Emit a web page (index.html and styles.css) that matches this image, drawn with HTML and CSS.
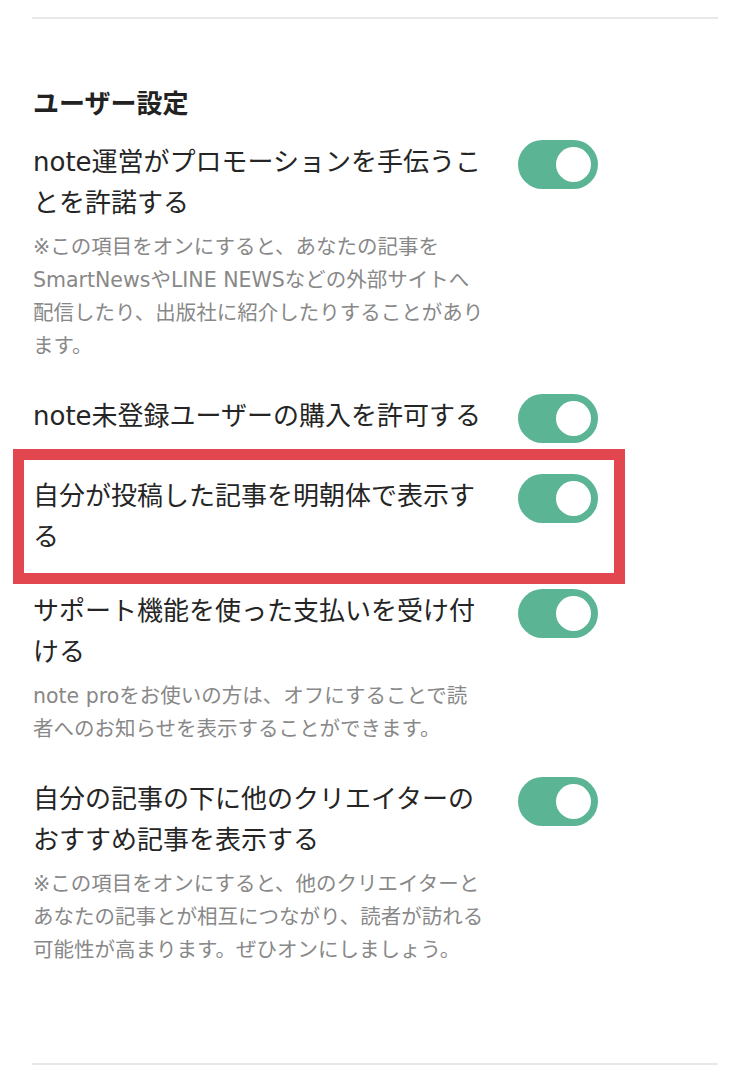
FILE: index.html
```html
<!DOCTYPE html>
<html lang="ja">
<head>
    <meta charset="UTF-8">
    <title>ユーザー設定</title>
    <link rel="stylesheet" href="styles.css">
</head>
<body>
    <div class="wrap">
        <div class="section">
            <h2 class="title">ユーザー設定</h2>
            <ul class="list">
                <li class="item">
                    <div class="text">
                        <p class="label">note運営がプロモーションを手伝うことを許諾する</p>
                        <p class="desc">※この項目をオンにすると、あなたの記事をSmartNewsやLINE NEWSなどの外部サイトへ配信したり、出版社に紹介したりすることがあります。</p>
                    </div>
                    <span class="toggle on"></span>
                </li>
                <li class="item">
                    <div class="text">
                        <p class="label">note未登録ユーザーの購入を許可する</p>
                    </div>
                    <span class="toggle on"></span>
                </li>
                <li class="item mark">
                    <div class="text">
                        <p class="label">自分が投稿した記事を明朝体で表示する</p>
                    </div>
                    <span class="toggle on"></span>
                </li>
                <li class="item">
                    <div class="text">
                        <p class="label">サポート機能を使った支払いを受け付ける</p>
                        <p class="desc">note proをお使いの方は、オフにすることで読者へのお知らせを表示することができます。</p>
                    </div>
                    <span class="toggle on"></span>
                </li>
                <li class="item">
                    <div class="text">
                        <p class="label">自分の記事の下に他のクリエイターのおすすめ記事を表示する</p>
                        <p class="desc">※この項目をオンにすると、他のクリエイターとあなたの記事とが相互につながり、読者が訪れる可能性が高まります。ぜひオンにしましょう。</p>
                    </div>
                    <span class="toggle on"></span>
                </li>
            </ul>
        </div>
    </div>
</body>
</html>
```

FILE: styles.css
```css
*,*::before,*::after{
    margin: 0;
    padding: 0;
    list-style: none;
    box-sizing: border-box;
}
html,body{
    width: 100%;
    height: 100%;
    background: #fff;
}
body{
    font-family: "DejaVu Sans", "Noto Sans CJK JP", sans-serif;
    color: #222;
}
.wrap{
    padding: 17px 32px 0;
}
.section{
    border-top: 2px solid #e8e8e8;
    border-bottom: 2px solid #e8e8e8;
    padding: 67px 0 96px;
}
.title{
    font-size: 26px;
    font-weight: bold;
    line-height: 36px;
    margin-bottom: 20px;
    padding-left: 1px;
}
.list .item{
    display: flex;
    align-items: flex-start;
    margin-bottom: 33px;
    position: relative;
}
.list .item:last-child{
    margin-bottom: 0;
}
.text{
    width: 453px;
    padding-left: 1px;
}
.label{
    font-size: 26px;
    line-height: 41px;
    color: #252525;
}
.desc{
    margin-top: 7px;
    font-size: 20.5px;
    line-height: 33px;
    color: #888;
}
.toggle{
    width: 80px;
    height: 49px;
    margin: -2px 0 0 33px;
    border-radius: 25px;
    background: #5bb594;
    position: relative;
    flex-shrink: 0;
}
.toggle::after{
    content: "";
    position: absolute;
    top: 7px;
    right: 7px;
    width: 35px;
    height: 35px;
    border-radius: 50%;
    background: #fff;
}
/* 赤枠 */
.item.mark::before{
    content: "";
    position: absolute;
    top: -27px;
    left: -19px;
    width: 612px;
    height: 135px;
    border: 11px solid #e2474f;
}
```
